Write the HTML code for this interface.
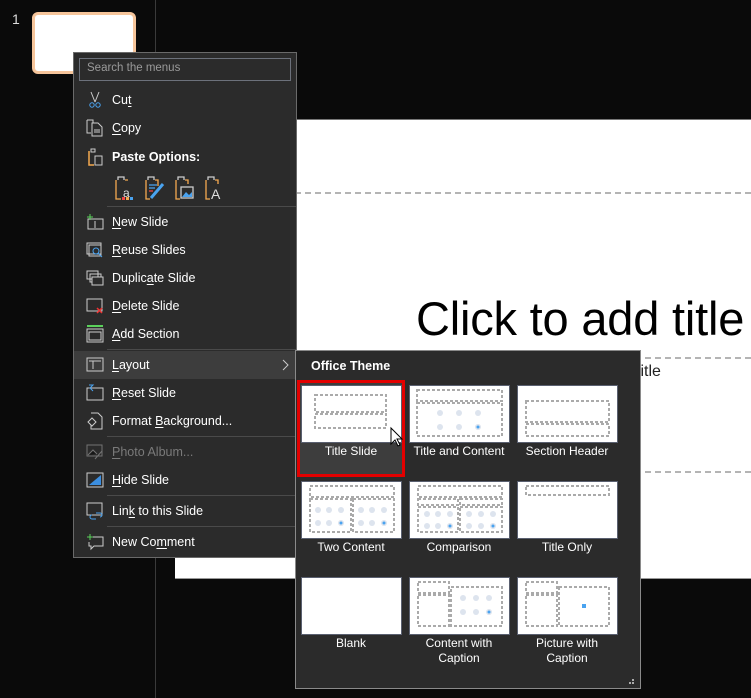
<!DOCTYPE html>
<html><head><meta charset="utf-8"><style>
*{margin:0;padding:0;box-sizing:border-box}
body{width:751px;height:698px;background:#0a0a0a;position:relative;overflow:hidden;font-family:"Segoe UI","Liberation Sans",sans-serif;}
.abs{position:absolute}
.mi{position:absolute;left:112px;color:#fff;font-size:12.5px;line-height:16px;white-space:nowrap}
.ic{position:absolute;left:86px;width:18px;height:18px}
.sep{position:absolute;left:107px;width:189px;height:1px;background:#4a4a4a}
.lb{position:absolute;width:108px;text-align:center;color:#fff;font-size:12px;line-height:15px}
u{text-decoration:underline;text-underline-offset:2px}
</style></head><body>
<div class="abs" style="left:155px;top:0;width:1px;height:698px;background:#3a3a3a"></div>
<div class="abs" style="left:12px;top:11px;color:#ddd;font-size:14px">1</div>
<div class="abs" style="left:32px;top:12px;width:104px;height:62px;border:3px solid #f6c59b;border-radius:6px;background:#fff"></div>
<div class="abs" style="left:175px;top:119px;width:576px;height:460px;background:#fff;border-top:1px solid #777;border-bottom:1px solid #999"></div>
<div class="abs" style="left:175px;top:192px;width:576px;border-top:2px dashed #b4b4b4"></div>
<div class="abs" style="left:175px;top:357px;width:576px;border-top:2px dashed #b4b4b4"></div>
<div class="abs" style="left:175px;top:471px;width:576px;border-top:2px dashed #b4b4b4"></div>
<div class="abs" style="left:416px;top:291px;font-size:47px;color:#000;font-family:'Liberation Sans',sans-serif;white-space:nowrap;letter-spacing:-0.2px">Click to add title</div>
<div class="abs" style="left:636px;top:363px;font-size:16px;color:#222;font-family:'Liberation Sans',sans-serif">title</div>

<div class="abs" style="left:73px;top:52px;width:224px;height:506px;background:#2b2b2b;border:1px solid #6a6a6a"></div>
<div class="abs" style="left:79px;top:58px;width:212px;height:23px;border:1px solid #6c717b;background:#2b2b2b;color:#9a9a9a;font-size:11.5px;padding:3px 7px">Search the menus</div>

<svg class="ic" style="top:91px" viewBox="0 0 18 18"><path d="M5 1l4 10M13 1l-4 10" stroke="#ccc" fill="none"/><circle cx="6" cy="14" r="2.2" stroke="#4aa3f0" fill="none"/><circle cx="12" cy="14" r="2.2" stroke="#4aa3f0" fill="none"/></svg>
<div class="mi" style="top:92px">Cu<u>t</u></div>
<svg class="ic" style="top:119px" viewBox="0 0 18 18"><path d="M1 1h6v3M1 1v13h4M6 4h6l4 4v9H6z" stroke="#ccc" fill="none"/><path d="M8 11h6M8 13h6" stroke="#ccc"/></svg>
<div class="mi" style="top:120px"><u>C</u>opy</div>
<svg class="ic" style="top:148px" viewBox="0 0 18 18"><path d="M3 3v14h5" stroke="#f4a950" stroke-width="1.5" fill="none"/><path d="M5 1h4v3H5z" stroke="#ccc" fill="none"/><path d="M9 8h7v9H9z" stroke="#ccc" fill="none"/></svg>
<div class="mi" style="top:149px;font-weight:bold">Paste Options:</div>
<svg class="abs" style="left:113px;top:176px" width="115" height="24" viewBox="0 0 115 24"><g fill="none" stroke-width="1.3"><path d="M3 4v19h5M12 4h3" stroke="#f4a950"/><path d="M5 4V1h6v3" stroke="#ccc"/><text x="10" y="21" fill="#ddd" stroke="none" font-size="12" font-family="Liberation Sans">a</text><rect x="9" y="21" width="3" height="3" fill="#e44" stroke="none"/><rect x="13" y="21" width="3" height="3" fill="#f4a950" stroke="none"/><rect x="17" y="21" width="3" height="3" fill="#4aa3f0" stroke="none"/>
<path d="M33 4v19h4M42 4h3v6" stroke="#f4a950"/><path d="M35 4V1h6v3" stroke="#ccc"/><path d="M36 9h8M36 12h6" stroke="#4aa3f0"/><path d="M36 15h4" stroke="#e44"/><path d="M50 8L38 22" stroke="#4aa3f0" stroke-width="3"/>
<path d="M63 4v19h4M72 4h3v4" stroke="#f4a950"/><path d="M65 4V1h6v3" stroke="#ccc"/><rect x="68" y="11" width="12" height="11" stroke="#ccc"/><path d="M69 21l4-5 3 3 3-3v5z" fill="#4aa3f0" stroke="none"/>
<path d="M93 4v19h4M102 4h3v4" stroke="#f4a950"/><path d="M95 4V1h6v3" stroke="#ccc"/><text x="98" y="23" fill="#ddd" stroke="none" font-size="14" font-family="Liberation Sans">A</text></g></svg>
<div class="sep" style="top:206px"></div>

<svg class="ic" style="top:213px" viewBox="0 0 18 18"><rect x="2" y="6" width="15" height="10" stroke="#ccc" fill="none"/><path d="M4 1v6M1 4h6" stroke="#5ad15a"/><path d="M9 8v7" stroke="#ccc"/></svg>
<div class="mi" style="top:214px"><u>N</u>ew Slide</div>
<svg class="ic" style="top:241px" viewBox="0 0 18 18"><rect x="1" y="2" width="14" height="11" stroke="#ccc" fill="none"/><rect x="3" y="4" width="12" height="11" stroke="#ccc" fill="none"/><circle cx="10" cy="10" r="3" stroke="#4aa3f0" fill="none"/><path d="M12 12l4 4" stroke="#4aa3f0"/></svg>
<div class="mi" style="top:242px"><u>R</u>euse Slides</div>
<svg class="ic" style="top:269px" viewBox="0 0 18 18"><rect x="1" y="2" width="11" height="8" stroke="#ccc" fill="none"/><rect x="4" y="5" width="11" height="8" stroke="#ccc" fill="none" /><rect x="6" y="8" width="11" height="8" stroke="#ccc" fill="#2b2b2b"/></svg>
<div class="mi" style="top:270px">Duplic<u>a</u>te Slide</div>
<svg class="ic" style="top:297px" viewBox="0 0 18 18"><rect x="1" y="2" width="15" height="12" stroke="#ccc" fill="none"/><path d="M11 11l5 5M16 11l-5 5" stroke="#e33" stroke-width="1.5"/></svg>
<div class="mi" style="top:298px"><u>D</u>elete Slide</div>
<svg class="ic" style="top:325px" viewBox="0 0 18 18"><path d="M1 1h16" stroke="#5ad15a" stroke-width="2"/><rect x="1" y="4" width="16" height="13" stroke="#ccc" fill="none"/><rect x="3" y="7" width="12" height="8" stroke="#ccc" fill="none"/></svg>
<div class="mi" style="top:326px"><u>A</u>dd Section</div>
<div class="sep" style="top:349px"></div>

<div class="abs" style="left:74px;top:351px;width:222px;height:28px;background:#3d3d3d"></div>
<svg class="ic" style="top:356px" viewBox="0 0 18 18"><rect x="1" y="2" width="16" height="13" stroke="#ccc" fill="none"/><path d="M3 5h12M7 5v8" stroke="#ccc"/></svg>
<div class="mi" style="top:357px"><u>L</u>ayout</div>
<svg class="abs" style="left:281px;top:359px" width="8" height="12"><path d="M2 1l5 5-5 5" stroke="#ccc" fill="none"/></svg>
<svg class="ic" style="top:384px" viewBox="0 0 18 18"><rect x="1" y="4" width="16" height="12" stroke="#ccc" fill="none"/><path d="M3 1h4l-3 3 3 3" stroke="#4aa3f0" fill="none"/></svg>
<div class="mi" style="top:385px"><u>R</u>eset Slide</div>
<svg class="ic" style="top:412px" viewBox="0 0 18 18"><path d="M5 1h7l4 4v12H5v-4" stroke="#ccc" fill="none"/><path d="M2 10l4-4 4 4-4 4z" stroke="#ccc" fill="none"/></svg>
<div class="mi" style="top:413px">Format <u>B</u>ackground...</div>
<div class="sep" style="top:436px"></div>
<svg class="ic" style="top:443px;opacity:.45" viewBox="0 0 18 18"><rect x="1" y="2" width="15" height="11" stroke="#ccc" fill="none"/><path d="M2 12l5-5 4 4M9 16l7-8" stroke="#ccc"/></svg>
<div class="mi" style="top:444px;color:#7a7a7a"><u>P</u>hoto Album...</div>
<svg class="ic" style="top:471px" viewBox="0 0 18 18"><rect x="1" y="2" width="16" height="14" stroke="#ccc" fill="none"/><path d="M3 14L15 4v10z" fill="#3b8ee0"/></svg>
<div class="mi" style="top:472px"><u>H</u>ide Slide</div>
<div class="sep" style="top:495px"></div>
<svg class="ic" style="top:502px" viewBox="0 0 18 18"><rect x="1" y="1" width="15" height="12" stroke="#ccc" fill="none"/><path d="M6 13a2 2 0 0 0 0 4h4M10 11h4a2 2 0 0 1 0 4" stroke="#4aa3f0" fill="none"/></svg>
<div class="mi" style="top:503px">Lin<u>k</u> to this Slide</div>
<div class="sep" style="top:526px"></div>
<svg class="ic" style="top:533px" viewBox="0 0 18 18"><path d="M7 4h10v9H8l-3 3v-3H3V9" stroke="#ccc" fill="none"/><path d="M4 1v6M1 4h6" stroke="#5ad15a"/></svg>
<div class="mi" style="top:534px">New Co<u>m</u>ment</div>

<div class="abs" style="left:295px;top:350px;width:346px;height:339px;background:#2b2b2b;border:1px solid #8a8a8a"></div>
<div class="abs" style="left:311px;top:359px;color:#fff;font-size:12.5px;font-weight:bold">Office Theme</div>
<div class="abs" style="left:297px;top:380px;width:108px;height:97px;background:#3d3d3d;border:3px solid #e30000"></div>

<svg class="abs" style="left:0;top:0" width="751" height="698" viewBox="0 0 751 698">
<g fill="#fff" stroke="#5a6070">
<rect x="301.5" y="385.5" width="100" height="57"/><rect x="409.5" y="385.5" width="100" height="57"/><rect x="517.5" y="385.5" width="100" height="57"/>
<rect x="301.5" y="481.5" width="100" height="57"/><rect x="409.5" y="481.5" width="100" height="57"/><rect x="517.5" y="481.5" width="100" height="57"/>
<rect x="301.5" y="577.5" width="100" height="57"/><rect x="409.5" y="577.5" width="100" height="57"/><rect x="517.5" y="577.5" width="100" height="57"/>
</g>
<g fill="none" stroke="#aaa" stroke-width="2" stroke-dasharray="3,2">
<rect x="315" y="395" width="71" height="17"/><rect x="315" y="414" width="71" height="14"/>
<rect x="417" y="390" width="85" height="11"/><rect x="417" y="403" width="85" height="33"/>
<rect x="526" y="401" width="83" height="21"/><rect x="526" y="424" width="83" height="12"/>
<rect x="310" y="486" width="84" height="11"/><rect x="310" y="499" width="41" height="33"/><rect x="353" y="499" width="41" height="33"/>
<rect x="418" y="486" width="84" height="11"/><rect x="418" y="499" width="40" height="6"/><rect x="460" y="499" width="42" height="6"/><rect x="418" y="507" width="40" height="25"/><rect x="460" y="507" width="42" height="25"/>
<rect x="526" y="486" width="83" height="9"/>
<rect x="418" y="582" width="31" height="11"/><rect x="418" y="595" width="31" height="31"/><rect x="451" y="587" width="51" height="39"/>
<rect x="526" y="582" width="31" height="11"/><rect x="526" y="595" width="31" height="31"/><rect x="559" y="587" width="50" height="39"/>
</g>
<g fill="#dde4ee">
<circle cx="440" cy="413" r="3"/><circle cx="459" cy="413" r="3"/><circle cx="478" cy="413" r="3"/><circle cx="440" cy="427" r="3"/><circle cx="459" cy="427" r="3"/><circle cx="478" cy="427" r="3"/>
<circle cx="318" cy="510" r="3"/><circle cx="329" cy="510" r="3"/><circle cx="341" cy="510" r="3"/><circle cx="318" cy="523" r="3"/><circle cx="329" cy="523" r="3"/><circle cx="341" cy="523" r="3"/>
<circle cx="361" cy="510" r="3"/><circle cx="372" cy="510" r="3"/><circle cx="384" cy="510" r="3"/><circle cx="361" cy="523" r="3"/><circle cx="372" cy="523" r="3"/><circle cx="384" cy="523" r="3"/>
<circle cx="427" cy="514" r="3"/><circle cx="438" cy="514" r="3"/><circle cx="450" cy="514" r="3"/><circle cx="427" cy="526" r="3"/><circle cx="438" cy="526" r="3"/><circle cx="450" cy="526" r="3"/>
<circle cx="469" cy="514" r="3"/><circle cx="481" cy="514" r="3"/><circle cx="493" cy="514" r="3"/><circle cx="469" cy="526" r="3"/><circle cx="481" cy="526" r="3"/><circle cx="493" cy="526" r="3"/>
<circle cx="463" cy="598" r="3"/><circle cx="476" cy="598" r="3"/><circle cx="489" cy="598" r="3"/><circle cx="463" cy="612" r="3"/><circle cx="476" cy="612" r="3"/><circle cx="489" cy="612" r="3"/>
</g>
<g fill="#4aa3f0"><circle cx="478" cy="427" r="1.5"/><circle cx="341" cy="523" r="1.5"/><circle cx="384" cy="523" r="1.5"/><circle cx="450" cy="526" r="1.5"/><circle cx="493" cy="526" r="1.5"/><circle cx="489" cy="612" r="1.5"/><rect x="582" y="604" width="4" height="4"/></g>
<path d="M391 428v16l4-4 3 6 2-1-3-6h5z" fill="#fff" stroke="#000"/>
<g fill="#aaa"><rect x="632" y="679" width="2" height="2"/><rect x="629" y="682" width="2" height="2"/><rect x="632" y="682" width="2" height="2"/></g>
</svg>

<div class="lb" style="left:297px;top:444px">Title Slide</div>
<div class="lb" style="left:405px;top:444px">Title and Content</div>
<div class="lb" style="left:513px;top:444px">Section Header</div>
<div class="lb" style="left:297px;top:540px">Two Content</div>
<div class="lb" style="left:405px;top:540px">Comparison</div>
<div class="lb" style="left:513px;top:540px">Title Only</div>
<div class="lb" style="left:297px;top:636px">Blank</div>
<div class="lb" style="left:405px;top:636px">Content with<br>Caption</div>
<div class="lb" style="left:513px;top:636px">Picture with<br>Caption</div>
</body></html>
